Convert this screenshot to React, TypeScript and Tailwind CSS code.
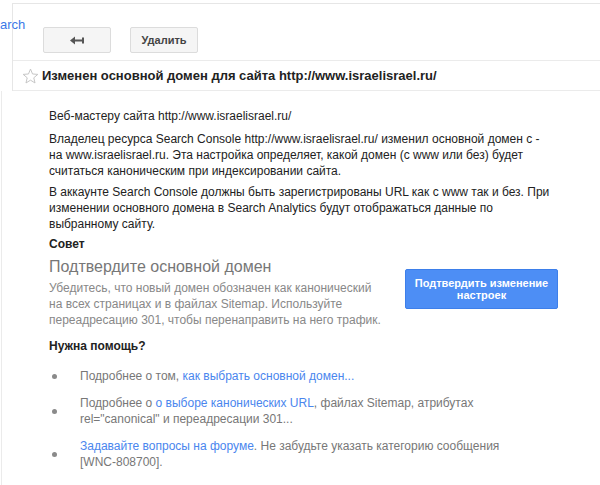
import React from 'react';

const links = '#4a86ee';

function BackArrow() {
  return (
    <svg width="14" height="9" viewBox="0 0 14 9" className="block">
      <path d="M0 4.5 L5 0.5 L5 8.5 Z" fill="#555" />
      <rect x="4" y="3.5" width="8" height="2" fill="#555" />
      <rect x="12" y="1.5" width="2" height="6" fill="#555" />
    </svg>
  );
}

function Star() {
  return (
    <svg width="17" height="16" viewBox="0 0 24 23" className="block">
      <path
        d="M12 1.5 L14.9 8.6 L22.5 9.2 L16.7 14.1 L18.5 21.5 L12 17.5 L5.5 21.5 L7.3 14.1 L1.5 9.2 L9.1 8.6 Z"
        fill="none"
        stroke="#c4c4c4"
        strokeWidth="1.4"
        strokeLinejoin="round"
      />
    </svg>
  );
}

function Bullet({ children }: { children: React.ReactNode }) {
  return (
    <li className="flex items-center">
      <span className="ml-[52px] h-[5px] w-[5px] shrink-0 rounded-full bg-[#8a8a8a]" />
      <div className="ml-[23px] w-[430px] text-[12px] leading-[16px] text-[#777]">{children}</div>
    </li>
  );
}

export default function App() {
  return (
    <div className="relative h-[485px] w-[600px] overflow-hidden bg-white font-['Liberation_Sans',Arial,sans-serif]">
      <div className="absolute left-0 top-[15px] text-[13px] text-[#3b78e7]">arch</div>

      <div className="ml-[12px] mt-[3px] border-l border-t border-[#e6e6e6]">
        <div className="flex gap-[19px] pl-[30px] pt-[23px]">
          <button className="flex h-[26px] w-[68px] items-center justify-center rounded-[2px] border border-[#dcdcdc] bg-[#f5f5f5]">
            <BackArrow />
          </button>
          <button className="flex h-[26px] w-[68px] items-center justify-center rounded-[2px] border border-[#dcdcdc] bg-[#f5f5f5] text-[11px] font-bold text-[#444]">
            Удалить
          </button>
        </div>
        <div className="mt-[7px] flex h-[31px] items-center border-y border-[#ebebeb]">
          <span className="ml-[9px]">
            <Star />
          </span>
          <h1 className="ml-[3px] text-[13px] font-bold text-[#222]">
            Изменен основной домен для сайта http://www.israelisrael.ru/
          </h1>
        </div>
      </div>

      <div className="ml-[1px] h-full border-l border-[#ebebeb] pl-[47px] pt-[17px] text-[12px] leading-[16px] text-[#222]">
        <p>Веб-мастеру сайта http://www.israelisrael.ru/</p>
        <p className="mt-[7px] w-[510px]">
          Владелец ресурса Search Console http://www.israelisrael.ru/ изменил основной домен с -<br />
          на www.israelisrael.ru. Эта настройка определяет, какой домен (с www или без) будет считаться
          каноническим при индексировании сайта.
        </p>
        <p className="mt-[5px] w-[510px]">
          В аккаунте Search Console должны быть зарегистрированы URL как с www так и без. При изменении
          основного домена в Search Analytics будут отображаться данные по выбранному сайту.
        </p>

        <div className="mt-[4px] font-bold">Совет</div>
        <div className="flex">
          <div className="w-[340px]">
            <div className="mt-[5px] text-[16px] leading-[20px] text-[#777]">Подтвердите основной домен</div>
            <p className="mt-[3px] w-[335px] text-[#888]">
              Убедитесь, что новый домен обозначен как канонический на всех страницах и в файлах Sitemap.
              Используйте переадресацию 301, чтобы перенаправить на него трафик.
            </p>
          </div>
          <button className="ml-[16px] mt-[17px] flex h-[40px] w-[153px] flex-col items-center justify-center self-start rounded-[2px] border border-[#3d7fea] bg-[#4d8ef5] text-[11px] font-bold leading-[12px] text-white">
            <span>Подтвердить изменение</span>
            <span>настроек</span>
          </button>
        </div>

        <div className="mt-[10px] font-bold">Нужна помощь?</div>
      </div>

      <ul className="absolute left-0 top-[368px] flex flex-col gap-[11px]">
        <Bullet>
          Подробнее о том, <span style={{ color: links }}>как выбрать основной домен...</span>
        </Bullet>
        <Bullet>
          Подробнее о <span style={{ color: links }}>о выборе канонических URL</span>, файлах Sitemap,
          атрибутах rel="canonical" и переадресации 301...
        </Bullet>
        <Bullet>
          <span style={{ color: links }}>Задавайте вопросы на форуме</span>. Не забудьте указать категорию
          сообщения [WNC-808700].
        </Bullet>
      </ul>
    </div>
  );
}
